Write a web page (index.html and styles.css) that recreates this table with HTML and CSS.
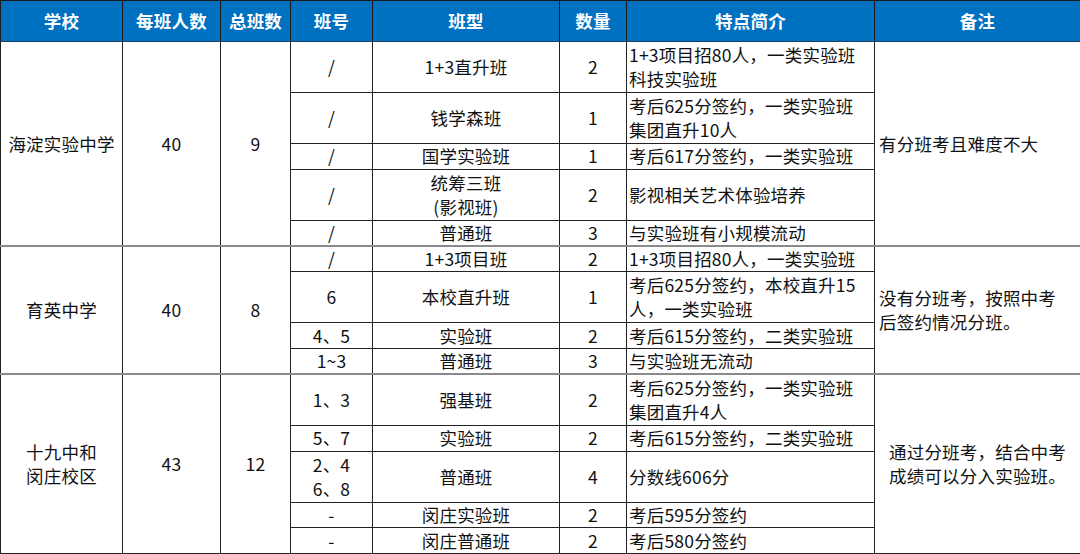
FILE: index.html
```html
<!DOCTYPE html>
<html lang="zh-CN">
<head>
<meta charset="utf-8">
<title>分班表</title>
<link rel="stylesheet" href="styles.css">
</head>
<body>
<table class="tbl">
  <colgroup>
    <col class="c1"><col class="c2"><col class="c3"><col class="c4">
    <col class="c5"><col class="c6"><col class="c7"><col class="c8">
  </colgroup>
  <thead>
    <tr class="head">
      <th>学校</th><th>每班人数</th><th>总班数</th><th>班号</th>
      <th>班型</th><th>数量</th><th>特点简介</th><th>备注</th>
    </tr>
  </thead>
  <tbody>
    <tr class="dbl">
      <td rowspan="5" class="ctr">海淀实验中学</td>
      <td rowspan="5" class="ctr">40</td>
      <td rowspan="5" class="ctr">9</td>
      <td class="ctr">/</td><td class="ctr">1+3直升班</td><td class="ctr">2</td>
      <td class="lft">1+3项目招80人，一类实验班<br>科技实验班</td>
      <td rowspan="5" class="note">有分班考且难度不大</td>
    </tr>
    <tr class="dbl">
      <td class="ctr">/</td><td class="ctr">钱学森班</td><td class="ctr">1</td>
      <td class="lft">考后625分签约，一类实验班<br>集团直升10人</td>
    </tr>
    <tr class="sgl">
      <td class="ctr">/</td><td class="ctr">国学实验班</td><td class="ctr">1</td>
      <td class="lft">考后617分签约，一类实验班</td>
    </tr>
    <tr class="dbl">
      <td class="ctr">/</td><td class="ctr">统筹三班<br>(影视班)</td><td class="ctr">2</td>
      <td class="lft">影视相关艺术体验培养</td>
    </tr>
    <tr class="sgl">
      <td class="ctr">/</td><td class="ctr">普通班</td><td class="ctr">3</td>
      <td class="lft">与实验班有小规模流动</td>
    </tr>

    <tr class="sgl grp">
      <td rowspan="4" class="ctr">育英中学</td>
      <td rowspan="4" class="ctr">40</td>
      <td rowspan="4" class="ctr">8</td>
      <td class="ctr">/</td><td class="ctr">1+3项目班</td><td class="ctr">2</td>
      <td class="lft">1+3项目招80人，一类实验班</td>
      <td rowspan="4" class="note">没有分班考，按照中考<br>后签约情况分班。</td>
    </tr>
    <tr class="dbl">
      <td class="ctr">6</td><td class="ctr">本校直升班</td><td class="ctr">1</td>
      <td class="lft">考后625分签约，本校直升15<br>人，一类实验班</td>
    </tr>
    <tr class="sgl">
      <td class="ctr">4、5</td><td class="ctr">实验班</td><td class="ctr">2</td>
      <td class="lft">考后615分签约，二类实验班</td>
    </tr>
    <tr class="sgl">
      <td class="ctr">1~3</td><td class="ctr">普通班</td><td class="ctr">3</td>
      <td class="lft">与实验班无流动</td>
    </tr>

    <tr class="dbl grp">
      <td rowspan="5" class="ctr">十九中和<br>闵庄校区</td>
      <td rowspan="5" class="ctr">43</td>
      <td rowspan="5" class="ctr">12</td>
      <td class="ctr">1、3</td><td class="ctr">强基班</td><td class="ctr">2</td>
      <td class="lft">考后625分签约，一类实验班<br>集团直升4人</td>
      <td rowspan="5" class="ctr">通过分班考，结合中考<br>成绩可以分入实验班。</td>
    </tr>
    <tr class="sgl">
      <td class="ctr">5、7</td><td class="ctr">实验班</td><td class="ctr">2</td>
      <td class="lft">考后615分签约，二类实验班</td>
    </tr>
    <tr class="dbl soft">
      <td class="ctr">2、4<br>6、8</td><td class="ctr">普通班</td><td class="ctr">4</td>
      <td class="lft">分数线606分</td>
    </tr>
    <tr class="sgl">
      <td class="ctr">-</td><td class="ctr">闵庄实验班</td><td class="ctr">2</td>
      <td class="lft">考后595分签约</td>
    </tr>
    <tr class="sgl soft">
      <td class="ctr">-</td><td class="ctr">闵庄普通班</td><td class="ctr">2</td>
      <td class="lft">考后580分签约</td>
    </tr>
  </tbody>
</table>
</body>
</html>
```

FILE: styles.css
```css
html, body {
  margin: 0;
  padding: 0;
  background: #ffffff;
}

.tbl {
  width: 1080px;
  border-collapse: collapse;
  table-layout: fixed;
  font-family: "Noto Sans CJK SC", "Noto Sans", sans-serif;
  font-size: 17.5px;
  letter-spacing: 0.2px;
  line-height: 24px;
  color: #111111;
}

.c1 { width: 122px; }
.c2 { width: 98px; }
.c3 { width: 70px; }
.c4 { width: 82px; }
.c5 { width: 187px; }
.c6 { width: 67px; }
.c7 { width: 248px; }
.c8 { width: 206px; }

.tbl th,
.tbl td {
  border: 1px solid #222222;
  padding: 0;
  vertical-align: middle;
  white-space: nowrap;
  overflow: hidden;
}

.head {
  height: 41px;
  background: #0070c0;
}

.head th {
  color: #ffffff;
  font-weight: 700;
  text-align: center;
  border-color: #1a1a1a;
  border-bottom-color: #1f3f60;
}

.sgl { height: 25.75px; }
.dbl { height: 51px; }

.grp td {
  border-top: 2px solid #8a8a8a;
}

.soft td {
  border-top-color: #777777;
}

.ctr { text-align: center; }

.lft {
  text-align: left;
  padding-left: 2px !important;
}

.note {
  text-align: left;
  padding-left: 4px !important;
}
```
